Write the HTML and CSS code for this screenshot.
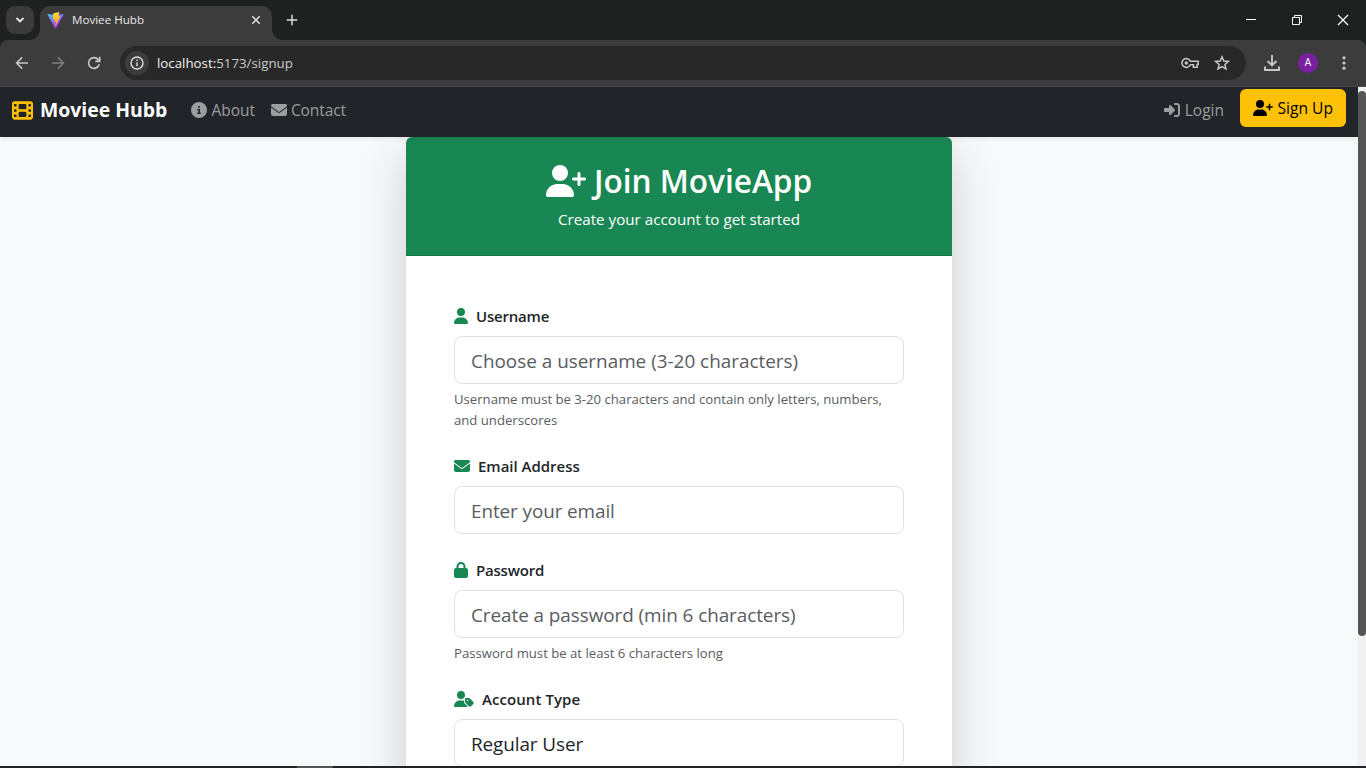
FILE: index.html
```html
<!DOCTYPE html>
<html lang="en">
<head>
<meta charset="utf-8">
<title>Moviee Hubb</title>
<link rel="stylesheet" href="styles.css">
</head>
<body>
<svg class="defs" aria-hidden="true">
  <symbol id="user-plus" viewBox="0 0 640 512"><path d="M96 128a128 128 0 1 1 256 0A128 128 0 1 1 96 128zM0 482.3C0 383.8 79.8 304 178.3 304h91.4C368.2 304 448 383.8 448 482.3c0 16.4-13.3 29.7-29.7 29.7H29.7C13.3 512 0 498.7 0 482.3zM504 312V248H440c-13.3 0-24-10.7-24-24s10.7-24 24-24h64V136c0-13.3 10.7-24 24-24s24 10.7 24 24v64h64c13.3 0 24 10.7 24 24s-10.7 24-24 24H552v64c0 13.3-10.7 24-24 24s-24-10.7-24-24z"/></symbol>
  <symbol id="envelope" viewBox="0 0 512 512"><path d="M48 64C21.5 64 0 85.5 0 112c0 15.1 7.1 29.3 19.2 38.4L236.8 313.6c11.4 8.5 27 8.5 38.4 0L492.8 150.4c12.1-9.1 19.2-23.3 19.2-38.4c0-26.5-21.5-48-48-48H48zM0 176V384c0 35.3 28.7 64 64 64H448c35.3 0 64-28.7 64-64V176L294.4 339.2c-22.8 17.1-54 17.1-76.8 0L0 176z"/></symbol>
</svg>
<div class="window">
  <div class="tabstrip">
    <button class="tab-search"><svg width="10" height="10" viewBox="0 0 10 10"><path d="M1.5 3 5 6.5 8.500 3" fill="none" stroke="#e8e8e8" stroke-width="1.8"/></svg></button>
    <div class="tab">
      <svg class="favicon" width="17" height="17" viewBox="0 0 410 404"><defs><linearGradient id="va" x1="6" y1="33" x2="235" y2="344" gradientUnits="userSpaceOnUse"><stop stop-color="#41d1ff"/><stop offset="1" stop-color="#bd34fe"/></linearGradient><linearGradient id="vb" x1="194" y1="9" x2="236" y2="293" gradientUnits="userSpaceOnUse"><stop stop-color="#ffea83"/><stop offset=".08" stop-color="#ffdd35"/><stop offset="1" stop-color="#ffa800"/></linearGradient></defs><path fill="url(#va)" d="M399.600 59.500 215.600 388.500c-3.800 6.800-13.600 6.800-17.400.1L10.600 59.600c-4.200-7.400 2.100-16.300 10.500-14.800l184.200 32.900c1.200.2 2.400.2 3.500 0l180.300-32.900c8.400-1.500 14.700 7.400 10.500 14.700z"/><path fill="url(#vb)" d="M293 1.600 156.800 28.300c-2.200.4-3.900 2.300-4 4.600l-8.400 141.500c-.2 3.300 2.900 5.900 6.100 5.200l37.900-8.800c3.600-.8 6.800 2.300 6 5.900l-11.300 55.200c-.7 3.700 2.700 6.900 6.300 5.800l23.500-7.100c3.600-1.100 7.100 2.100 6.300 5.800l-17.900 86.700c-1.100 5.400 6.100 8.400 9.100 3.700l2-3.100 111-221.500c1.900-3.700-1.300-7.900-5.400-7.100l-39 7.500c-3.700.7-6.800-2.700-5.800-6.300l25.500-88.300c1-3.600-2.100-7.100-5.700-6.400z"/></svg>
      <span class="tab-title">Moviee Hubb</span>
      <svg class="tab-close" width="10" height="10" viewBox="0 0 10 10"><path d="m1.300 1.300 7.400 7.400m0-7.400-7.400 7.400" stroke="#e4e4e4" stroke-width="1.500"/></svg>
    </div>
    <svg class="new-tab" width="12" height="12" viewBox="0 0 12 12"><path d="M6 .7v10.600M.7 6h10.600" stroke="#dcdcdc" stroke-width="1.500"/></svg>
    <div class="controls">
      <svg width="12" height="12" viewBox="0 0 12 12"><path d="M1 5.500h10" stroke="#fff"/></svg>
      <svg width="12" height="12" viewBox="0 0 12 12" fill="none" stroke="#fff"><path d="M1.500 3.500h7v7h-7zM3.500 3.500v-2h7v7h-2"/></svg>
      <svg width="12" height="12" viewBox="0 0 12 12"><path d="m1 1 10 10m0-10L1 11" stroke="#fff" stroke-width="1.200"/></svg>
    </div>
  </div>
  <div class="toolbar">
    <div class="nav-buttons">
      <svg width="14" height="14" viewBox="0 0 14 14" fill="none" stroke="#c7c7c7" stroke-width="1.600"><path d="M13 7H2m5.200-5.600L1.600 7l5.600 5.600"/></svg>
      <svg width="14" height="14" viewBox="0 0 14 14" fill="none" stroke="#7d7d7d" stroke-width="1.600"><path d="M1 7h11M6.800 1.400 12.400 7l-5.600 5.600"/></svg>
      <svg width="14" height="14" viewBox="0 0 14 14" fill="none" stroke="#c7c7c7" stroke-width="1.700"><path d="M12.200 8.300A5.400 5.400 0 1 1 11.200 3.600L12.500 5M12.700.8v4.500H8.300"/></svg>
    </div>
    <div class="address">
      <span class="site-info"><svg width="14" height="14" viewBox="0 0 14 14" fill="none" stroke="#dcdcdc" stroke-width="1.400"><circle cx="7" cy="7" r="6"/><path d="M7 6.200v4M7 3.500v1.500"/></svg></span>
      <span class="url"><b>localhost:</b>5173/signup</span>
      <svg class="key" width="18" height="12" viewBox="0 0 18 12" fill="none" stroke="#c7c7c7" stroke-width="1.500"><path d="M9.300 4.200H17.200v3.400h-1v2.600h-3.800V7.800H9.300A4.400 4.400 0 1 1 9.300 4.200z"/><circle cx="5.300" cy="6" r="1.700" fill="#c7c7c7" stroke="none"/></svg>
      <svg class="star" width="16" height="16" viewBox="0 0 16 16" fill="none" stroke="#c7c7c7" stroke-width="1.500"><path d="m8 1.800 1.800 4.200 4.600.4-3.500 3 1.100 4.500L8 11.500l-4 2.400 1.100-4.500-3.500-3 4.600-.4z"/></svg>
    </div>
    <svg class="download" width="16" height="16" viewBox="0 0 16 16" fill="none" stroke="#c7c7c7" stroke-width="1.900"><path d="M8 0v10M3.500 6 8 10.500 12.500 6M1 11.500V15h14v-3.500"/></svg>
    <span class="avatar">A</span>
    <svg class="more" width="4" height="14" viewBox="0 0 4 14" fill="#c7c7c7"><circle cx="2" cy="1.800" r="1.600"/><circle cx="2" cy="7" r="1.600"/><circle cx="2" cy="12.200" r="1.600"/></svg>
  </div>
  <div class="viewport">
    <div class="page">
      <nav class="navbar">
        <a class="brand"><svg width="21" height="21" viewBox="0 0 512 512"><path d="M0 96C0 60.700 28.700 32 64 32H448c35.300 0 64 28.700 64 64V416c0 35.300-28.700 64-64 64H64c-35.300 0-64-28.700-64-64V96zM48 368v32c0 8.800 7.200 16 16 16H96c8.800 0 16-7.200 16-16V368c0-8.800-7.200-16-16-16H64c-8.800 0-16 7.200-16 16zm368-16c-8.800 0-16 7.200-16 16v32c0 8.800 7.200 16 16 16h32c8.800 0 16-7.200 16-16V368c0-8.800-7.200-16-16-16H416zM48 240v32c0 8.800 7.200 16 16 16H96c8.800 0 16-7.200 16-16V240c0-8.800-7.200-16-16-16H64c-8.800 0-16 7.200-16 16zm368-16c-8.800 0-16 7.200-16 16v32c0 8.800 7.200 16 16 16h32c8.800 0 16-7.200 16-16V240c0-8.800-7.200-16-16-16H416zM48 112v32c0 8.800 7.200 16 16 16H96c8.800 0 16-7.200 16-16V112c0-8.800-7.200-16-16-16H64c-8.800 0-16 7.200-16 16zM416 96c-8.800 0-16 7.200-16 16v32c0 8.800 7.200 16 16 16h32c8.800 0 16-7.200 16-16V112c0-8.800-7.200-16-16-16H416zM160 128v64c0 17.700 14.300 32 32 32H320c17.700 0 32-14.300 32-32V128c0-17.700-14.300-32-32-32H192c-17.700 0-32 14.300-32 32zm32 160c-17.700 0-32 14.300-32 32v64c0 17.700 14.300 32 32 32H320c17.700 0 32-14.300 32-32V320c0-17.700-14.300-32-32-32H192z"/></svg><span>Moviee Hubb</span></a>
        <a class="link"><svg width="16" height="16" viewBox="0 0 512 512"><path d="M256 512A256 256 0 1 0 256 0a256 256 0 1 0 0 512zM216 336h24V272H216c-13.300 0-24-10.700-24-24s10.700-24 24-24h48c13.300 0 24 10.700 24 24v88h8c13.300 0 24 10.700 24 24s-10.700 24-24 24H216c-13.300 0-24-10.700-24-24s10.700-24 24-24zm40-208a32 32 0 1 1 0 64 32 32 0 1 1 0-64z"/></svg><span>About</span></a>
        <a class="link contact"><svg width="16" height="16"><use href="#envelope"/></svg><span>Contact</span></a>
        <a class="link login"><svg width="16" height="16" viewBox="0 0 512 512"><path d="M217.900 105.900L340.700 228.700c7.200 7.200 11.300 17.100 11.300 27.300s-4.100 20.100-11.300 27.300L217.900 406.100c-6.400 6.400-15 9.900-24 9.900c-18.700 0-33.900-15.200-33.900-33.900l0-62.100L32 320c-17.700 0-32-14.300-32-32l0-64c0-17.700 14.300-32 32-32l128 0 0-62.100c0-18.700 15.200-33.900 33.900-33.900c9 0 17.600 3.600 24 9.900zM352 416l64 0c17.700 0 32-14.300 32-32l0-256c0-17.700-14.300-32-32-32l-64 0c-17.700 0-32-14.300-32-32s14.300-32 32-32l64 0c53 0 96 43 96 96l0 256c0 53-43 96-96 96l-64 0c-17.700 0-32-14.300-32-32s14.300-32 32-32z"/></svg><span>Login</span></a>
        <a class="signup"><svg width="20" height="16"><use href="#user-plus"/></svg><span>Sign Up</span></a>
      </nav>
      <main class="content">
        <section class="card">
          <header class="card-header">
            <h1><svg width="40" height="32"><use href="#user-plus"/></svg><span>Join MovieApp</span></h1>
            <p>Create your account to get started</p>
          </header>
          <form class="card-body">
            <div class="field">
              <label><svg width="14" height="16" viewBox="0 0 448 512"><path d="M224 256A128 128 0 1 0 224 0a128 128 0 1 0 0 256zm-45.700 48C79.800 304 0 383.800 0 482.300C0 498.700 13.300 512 29.700 512H418.300c16.400 0 29.700-13.300 29.700-29.700C448 383.800 368.200 304 269.700 304H178.300z"/></svg><span class="tight">Username</span></label>
              <input class="control" type="text" placeholder="Choose a username (3-20 characters)">
              <small>Username must be 3-20 characters and contain only letters, numbers,<br>and underscores</small>
            </div>
            <div class="field">
              <label><svg width="16" height="16"><use href="#envelope"/></svg><span>Email Address</span></label>
              <input class="control email" type="text" placeholder="Enter your email">
            </div>
            <div class="field">
              <label><svg width="14" height="16" viewBox="0 0 448 512"><path d="M144 144v48H304V144c0-44.200-35.800-80-80-80s-80 35.800-80 80zM80 192V144C80 64.500 144.500 0 224 0s144 64.500 144 144v48h16c35.300 0 64 28.700 64 64V448c0 35.300-28.700 64-64 64H64c-35.300 0-64-28.700-64-64V256c0-35.300 28.700-64 64-64H80z"/></svg><span class="tight">Password</span></label>
              <input class="control create" type="text" placeholder="Create a password (min 6 characters)">
              <small>Password must be at least 6 characters long</small>
            </div>
            <div class="field">
              <label><svg width="20" height="16" viewBox="0 0 640 512"><path d="M224 256A128 128 0 1 0 224 0a128 128 0 1 0 0 256zm-45.700 48C79.800 304 0 383.800 0 482.300C0 498.700 13.300 512 29.700 512H418.300c10 0 18.800-4.900 24.200-12.500l-99.200-99.200c-14.900-14.900-23.300-35.100-23.300-56.100v-33c-15.900-4.700-32.800-7.200-50.300-7.200H178.300zM384 224c-17.700 0-32 14.300-32 32v82.700c0 17 6.700 33.300 18.700 45.300L478.100 491.300c18.700 18.700 49.100 18.700 67.900 0l73.400-73.400c18.700-18.700 18.700-49.100 0-67.900L512 242.700c-12-12-28.300-18.700-45.300-18.700H384zm24 80a24 24 0 1 1 48 0 24 24 0 1 1 -48 0z"/></svg><span class="wide">Account Type</span></label>
              <div class="control select">Regular User</div>
            </div>
          </form>
        </section>
      </main>
    </div>
    <div class="scrollbar"><div class="thumb"></div></div>
  </div>
  <div class="taskbar"><div class="taskbar-app"></div></div>
</div>
</body>
</html>
```
FILE: styles.css
```css
* { box-sizing: border-box; }
body { margin: 0; overflow: hidden; font-family: "Open Sans", "Noto Sans", sans-serif; color: #212529; }
svg { display: block; flex: none; }
.defs { display: none; }
.window { display: flex; flex-direction: column; width: 1366px; height: 768px; overflow: hidden; background: #1f2120; }

.tabstrip { display: flex; align-items: center; height: 40px; flex: none; padding-left: 6px; background: #1f2120; }
.tab-search { display: grid; place-items: center; width: 28px; height: 28px; padding: 0; border: 0; border-radius: 9px; background: #3a3b3a; }
.tab { display: flex; align-items: center; align-self: flex-end; position: relative; width: 232px; height: 34px; margin-left: 6px; padding: 0 11px 6px 7px; border-radius: 10px 10px 0 0; background: #3c3c3c; }
.tab::before, .tab::after { content: ""; position: absolute; bottom: 0; width: 10px; height: 10px; }
.tab::before { left: -10px; background: radial-gradient(circle at 0 0, transparent 9.5px, #3c3c3c 10px); }
.tab::after { right: -10px; background: radial-gradient(circle at 100% 0, transparent 9.5px, #3c3c3c 10px); }
.tab-title { margin-left: 8px; font-size: 11.6px; line-height: 16px; color: #e8e8e8; }
.tab-close { margin-left: auto; }
.new-tab { margin-left: 14px; }
.controls { display: flex; gap: 34px; margin-left: auto; padding-right: 17px; }

.toolbar { display: flex; align-items: center; height: 47px; flex: none; padding: 0 20px 1px 15px; border-bottom: 1px solid #4a4b4c; border-radius: 8px 8px 0 0; background: #3c3c3c; }
.nav-buttons { display: flex; gap: 22px; }
.address { display: flex; align-items: center; width: 1126px; height: 34px; margin-left: 19px; padding: 0 16px 0 5px; border-radius: 17px; background: #282828; }
.site-info { display: grid; place-items: center; width: 24px; height: 24px; border-radius: 50%; background: #3c3c3c; }
.url { margin-left: 8px; font-size: 13.3px; line-height: 20px; color: #c9c9c9; }
.url b { font-weight: 400; color: #f0f0f0; }
.key { margin-left: auto; }
.star { margin-left: 15px; }
.download { margin-left: 18px; }
.avatar { display: grid; place-items: center; width: 20px; height: 20px; margin-left: 18px; border-radius: 50%; background: #7b1fa2; font: 10.5px/20px Roboto, sans-serif; color: #fff; }
.more { margin-left: 24px; }

.viewport { display: flex; flex: 1; min-height: 0; }
.page { display: flex; flex-direction: column; width: 1358px; overflow: hidden; background: #f8f9fa; }
.navbar { display: flex; align-items: center; position: relative; height: 50px; flex: none; padding: 0 12px 5px; background: #212529; box-shadow: 0 2px 4px rgba(0, 0, 0, .075); }
.brand, .link { display: flex; align-items: center; padding-top: 1px; }
.brand { width: 179px; font-size: 19.4px; font-weight: 700; line-height: 30px; color: #fff; }
.brand svg { fill: #ffc107; }
.brand span { margin-left: 7px; }
.link { gap: 4px; font-size: 15.5px; line-height: 24px; color: #9b9d9e; }
.link svg, .signup svg { fill: currentColor; }
.link span { padding-left: .4px; }
.contact { margin-left: 15.5px; }
.contact span { letter-spacing: -.1px; }
.login { margin-left: auto; }
.signup { display: flex; align-items: center; gap: 4px; width: 106px; height: 38px; margin: 0 0 3px 16px; padding-left: 13px; border-radius: 6px; background: #ffc107; font-size: 15.6px; line-height: 24px; color: #000; }
.signup span { padding-left: .5px; }

.content { display: flex; justify-content: center; }
.card { width: 546px; height: 820px; border-radius: 6px 6px 0 0; background: #fff; box-shadow: 0 16px 48px rgba(0, 0, 0, .175); }
.card-header { height: 119px; padding-top: 25px; border-bottom: 1px solid #167347; border-radius: 6px 6px 0 0; background: #198754; color: #fff; text-align: center; }
.card-header h1 { display: flex; justify-content: center; align-items: center; gap: 8px; margin: 0 0 7px; font-size: 31.6px; font-weight: 600; line-height: 38px; letter-spacing: -.02px; }
.card-header h1 svg { fill: #fff; }
.card-header p { margin: 0; font-size: 15.2px; line-height: 24px; }
.card-body { padding: 48px; }
.field { margin-bottom: 24px; }
.field label { display: flex; align-items: center; gap: 8px; height: 24px; margin-bottom: 8px; font-size: 15px; font-weight: 600; line-height: 24px; letter-spacing: -.02px; }
.field label .tight { letter-spacing: -.2px; }
.field label .wide { letter-spacing: .07px; }
.field label svg { fill: #198754; }
.control { display: block; width: 450px; height: 48px; padding: 2px 16px 0; border: 1px solid #dee2e6; border-radius: 8px; background: #fff; font: 18.9px/44px "Open Sans", "Noto Sans", sans-serif; color: #212529; outline: 0; }
.control::placeholder { color: #595c5f; opacity: 1; }
.control.email, .control.select { letter-spacing: -.09px; }
.control.create { letter-spacing: -.06px; }
.field small { display: block; height: 21px; margin-top: 4px; padding-top: 1px; font-size: 13.15px; line-height: 21px; color: #595c5f; }
.field:first-child small { height: 42px; }

.scrollbar { width: 8px; padding-top: 4px; background: #f1f1f1; }
.thumb { height: 545px; border-radius: 4px; background: #555; }
.taskbar { height: 2px; flex: none; padding-left: 297px; background: #222326; }
.taskbar-app { width: 36px; height: 2px; background: #545557; }
```
